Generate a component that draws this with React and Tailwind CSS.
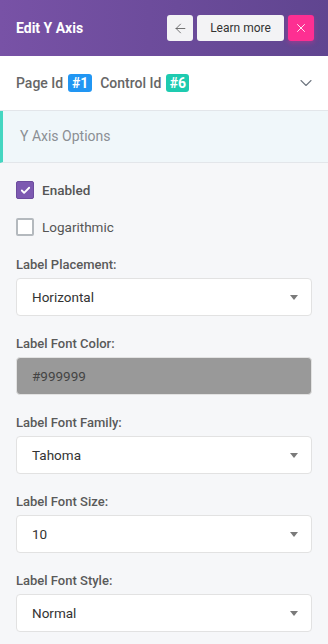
import { ArrowLeft, X, ChevronDown, Check } from 'lucide-react';

const Caret = () => (
    <svg width="8" height="5" viewBox="0 0 8 5" className="shrink-0">
        <path d="M0 0 L8 0 L4 5 Z" fill="#7a7a7a" />
    </svg>
);

const Field = ({ label, children, first }) => (
    <div className={first ? 'mt-[19px]' : 'mt-[18px]'}>
        <div className="text-[13px] leading-[20px] font-medium text-[#5a5a5a]">{label}</div>
        <div className="mt-[3px]">{children}</div>
    </div>
);

const Select = ({ value }) => (
    <div className="h-[38px] bg-white border border-[#e2e2e2] rounded-[4px] flex items-center justify-between pl-[15px] pr-[13px]">
        <span className="text-[13.5px] text-[#333]">{value}</span>
        <Caret />
    </div>
);

const App = () => {
    return (
        <div className="w-[328px] h-[644px] overflow-hidden bg-[#f6f7f9]" style={{ fontFamily: 'Roboto, "Noto Sans", sans-serif' }}>
            {/* Header */}
            <div className="h-[56px] bg-gradient-to-r from-[#7852a6] to-[#604590] flex items-center justify-between pl-4 pr-[14px]">
                <h1 className="text-white font-bold text-[14px]">Edit Y Axis</h1>
                <div className="flex items-center gap-[4px]">
                    <button className="w-[26px] h-[26px] bg-[#f3f3f5] rounded-[3px] flex items-center justify-center text-[#555]">
                        <ArrowLeft size={15} strokeWidth={1.3} />
                    </button>
                    <button className="h-[26px] w-[87px] bg-[#f3f3f5] rounded-[3px] text-[12px] text-[#333]">
                        Learn more
                    </button>
                    <button className="w-[26px] h-[26px] bg-[#fd2f92] rounded-[3px] flex items-center justify-center text-white shadow-[0_2px_5px_rgba(253,47,146,0.35)]">
                        <X size={14} strokeWidth={1.5} />
                    </button>
                </div>
            </div>

            {/* Ids row */}
            <div className="h-[55px] bg-white flex items-center justify-between pl-4 pr-[12px] border-b border-[#e3e6ea]">
                <div className="flex items-center text-[14px] font-medium text-[#666]">
                    <span>Page Id</span>
                    <span className="ml-[5px] w-[24px] text-center rounded-[3px] bg-[#2196f3] text-white text-[14px] leading-[18px] font-bold">#1</span>
                    <span className="ml-[8px]">Control Id</span>
                    <span className="ml-[5px] w-[23px] text-center rounded-[3px] bg-[#1ecbb0] text-white text-[14px] leading-[18px] font-bold">#6</span>
                </div>
                <ChevronDown size={20} strokeWidth={1.3} className="text-[#6f7680]" />
            </div>

            {/* Section */}
            <div className="h-[52px] bg-[#f0f7fa] border-l-[3px] border-[#45d6c1] border-b border-b-[#e3e6ea] flex items-center pl-[17px]">
                <span className="text-[14px] text-[#8b8f94]">Y Axis Options</span>
            </div>

            {/* Body */}
            <div className="px-4 pt-[18px]">
                <label className="flex items-center gap-[8px] h-[18px]">
                    <span className="w-[18px] h-[18px] rounded-[2px] bg-[#7d59b1] border border-[#6d4c9e] flex items-center justify-center">
                        <Check size={11} strokeWidth={4} className="text-white" />
                    </span>
                    <span className="text-[13.5px] text-[#555] font-medium">Enabled</span>
                </label>
                <label className="flex items-center gap-[8px] h-[18px] mt-[19px]">
                    <span className="w-[18px] h-[18px] rounded-[2px] bg-white border-2 border-[#b4b9be]" />
                    <span className="text-[13.5px] text-[#555]">Logarithmic</span>
                </label>

                <Field label="Label Placement:" first>
                    <Select value="Horizontal" />
                </Field>
                <Field label="Label Font Color:">
                    <div className="h-[38px] bg-[#999999] border border-[#e2e2e2] rounded-[4px] flex items-center pl-[15px]">
                        <span className="text-[13.5px] text-[#444]">#999999</span>
                    </div>
                </Field>
                <Field label="Label Font Family:">
                    <Select value="Tahoma" />
                </Field>
                <Field label="Label Font Size:">
                    <Select value="10" />
                </Field>
                <Field label="Label Font Style:">
                    <Select value="Normal" />
                </Field>
            </div>
        </div>
    );
};

export default App;
